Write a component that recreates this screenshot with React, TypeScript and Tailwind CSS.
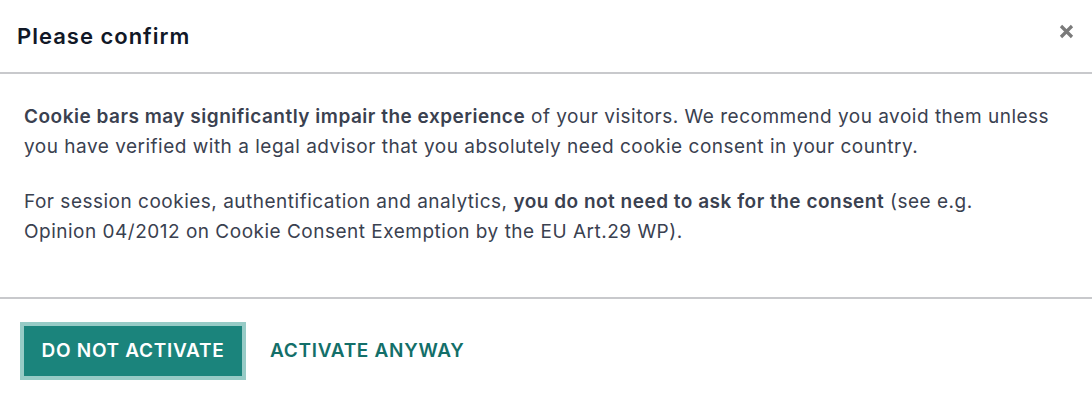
import React from "react";

export default function App() {
  return (
    <div className="w-[1092px] h-[402px] bg-white overflow-hidden" style={{ fontFamily: "Inter, 'Noto Sans', sans-serif" }}>
      <div className="flex items-center justify-between h-[74px] pl-[17px] pr-[18px] border-b-2 border-[#c8c9cc]">
        <h1 className="text-[22px] leading-[28px] font-semibold tracking-[1px] text-[#111827]">Please confirm</h1>
        <button className="w-[16px] h-[16px] flex items-center justify-center mt-[-10px]">
          <svg width="15" height="15" viewBox="0 0 15 15">
            <path d="M2 2 L13 13 M13 2 L2 13" stroke="#7a7a7a" strokeWidth="3.2" strokeLinecap="butt" />
          </svg>
        </button>
      </div>
      <div className="px-6 pt-[28px] pb-[50px] text-[19px] leading-[30px] tracking-[0.5px] text-[#3a4150]">
        <p className="mb-[25px]">
          <span className="font-semibold">Cookie bars may significantly impair the experience</span> of your visitors. We recommend you avoid them unless you have verified with a legal advisor that you absolutely need cookie consent in your country.
        </p>
        <p>
          For session cookies, authentification and analytics, <span className="font-semibold">you do not need to ask for the consent</span> (see e.g.
          <br />
          Opinion 04/2012 on Cookie Consent Exemption by the EU Art.29 WP).
        </p>
      </div>
      <div className="border-t-2 border-[#c8c9cc] pt-[27px] pl-6 flex items-center">
        <button className="h-[50px] w-[218px] bg-[#1b847c] text-white text-[19px] tracking-[0.7px] font-semibold uppercase ring-4 ring-[#97cbc6]">
          Do not activate
        </button>
        <button className="ml-[28px] text-[19px] tracking-[0.7px] font-semibold uppercase text-[#136f69]">
          Activate anyway
        </button>
      </div>
    </div>
  );
}
